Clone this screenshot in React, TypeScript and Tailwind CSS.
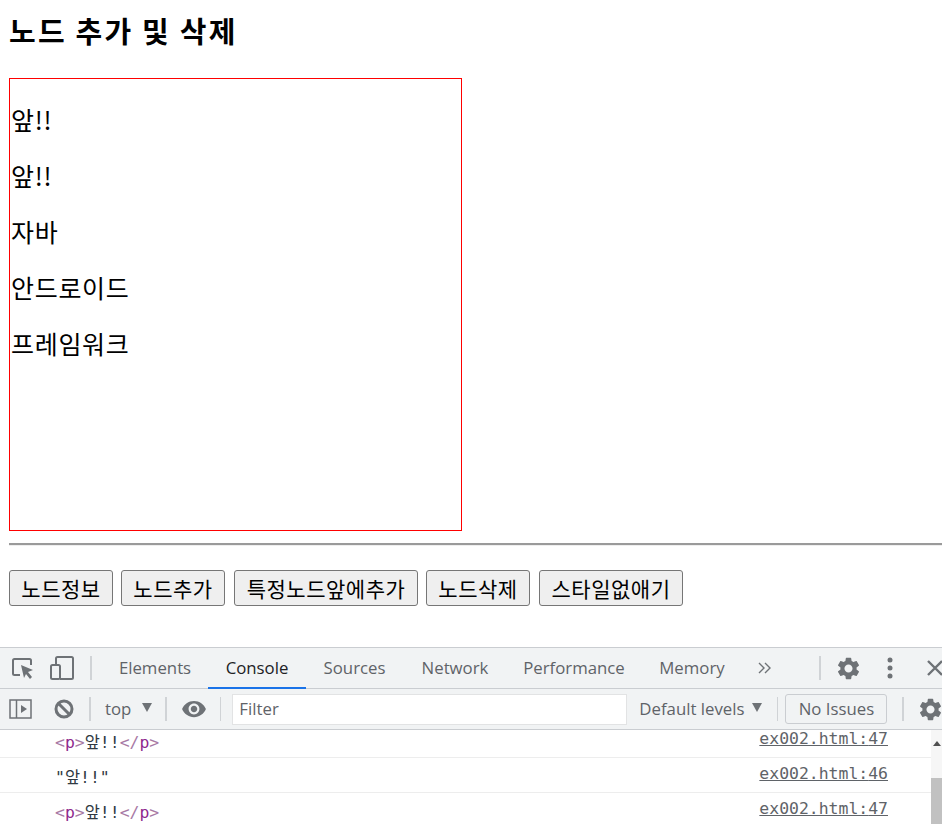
import { MdRemoveRedEye, MdSettings } from "react-icons/md";

const kr = "font-['Noto_Sans_CJK_KR','Liberation_Sans',sans-serif]";
const ui = "font-['Open_Sans','Noto_Sans',sans-serif]";
const mono = "font-['DejaVu_Sans_Mono','Noto_Sans_CJK_KR',monospace]";

const nodes = ["앞!!", "앞!!", "자바", "안드로이드", "프레임워크"];
const buttons = [
  { label: "노드정보", width: "w-[104px]", gap: "mr-2" },
  { label: "노드추가", width: "w-[104px]", gap: "mr-[9px]" },
  { label: "특정노드앞에추가", width: "w-[184px]", gap: "mr-2" },
  { label: "노드삭제", width: "w-[104px]", gap: "mr-[9px]" },
  { label: "스타일없애기", width: "w-[144px]", gap: "" },
];
const tabs = [
  { label: "Elements", width: "w-[106px]" },
  { label: "Console", width: "w-[98px]", active: true },
  { label: "Sources", width: "w-[97px]" },
  { label: "Network", width: "w-[104px]" },
  { label: "Performance", width: "w-[134px]" },
  { label: "Memory", width: "w-[102px]" },
];

function Divider({ className }: { className: string }) {
  return <div className={`w-0.5 shrink-0 bg-[#d0d3d6] ${className}`} />;
}

function PTag() {
  return (
    <span className="text-[#a87aa5]">
      &lt;<span className="text-[#8f2a8e]">p</span>&gt;
    </span>
  );
}

function CloseTag() {
  return (
    <span className="text-[#a87aa5]">
      &lt;/<span className="text-[#8f2a8e]">p</span>&gt;
    </span>
  );
}

function LogRow({ line, children, border }: { line: string; children: React.ReactNode; border?: boolean }) {
  return (
    <div className={`flex h-[35px] shrink-0 pl-[55px] pr-[54px] ${border ? "border-b border-[#ededed]" : ""}`}>
      <div className="flex-1 pt-[8px] leading-[24px] text-[#303942]">{children}</div>
      <span className="pt-[4px] leading-[24px] text-[#5f6368] underline">ex002.html:{line}</span>
    </div>
  );
}

export default function App() {
  return (
    <div className={`flex h-[824px] w-[942px] flex-col overflow-hidden bg-white text-black ${kr}`}>
      <div className="h-[647px] shrink-0 pl-[9px]">
        <h1 className="pt-[10px] text-[29px] leading-[40px] font-bold tracking-[2.200px]">노드 추가 및 삭제</h1>
        <div className="mt-[28px] h-[453px] w-[453px] border border-[#ff0000] pt-[24px] pl-px">
          {nodes.map((node, i) => (
            <p key={i} className="mb-[24px] h-8 text-[25px] leading-[32px] tracking-[0.7px]">
              {node}
            </p>
          ))}
        </div>
        <div className="mt-3 h-[3px] border-t-2 border-b border-t-[#9a9a9a] border-b-[#eeeeee]" />
        <div className="mt-[24px] flex">
          {buttons.map((b) => (
            <button
              key={b.label}
              type="button"
              className={`h-9 rounded-[3px] border border-[#767676] bg-[#efefef] text-[21px] leading-none tracking-[0.5px] ${b.width} ${b.gap}`}
            >
              {b.label}
            </button>
          ))}
        </div>
      </div>

      <div className={`flex flex-1 flex-col border-t border-[#cacdd1] text-[16.800px] text-[#5f6368] ${ui}`}>
        <div className="flex h-[41px] shrink-0 items-center border-b border-[#cacdd1] bg-[#f1f3f4]">
          <svg viewBox="0 0 24 24" className="ml-[11px] h-6 w-6 shrink-0" fill="none">
            <path d="M9 19H3.500A1.500 1.500 0 0 1 2 17.500v-13A1.500 1.500 0 0 1 3.500 3h15A1.500 1.500 0 0 1 20 4.500V9" stroke="#6e7276" strokeWidth="2" />
            <path d="M10 9l12 5-5 2 4 5-2 2-4-5-2 4z" fill="#6e7276" />
          </svg>
          <svg viewBox="0 0 24 24" className="ml-[15px] h-6 w-6 shrink-0" fill="none" stroke="#6e7276" strokeWidth="2">
            <rect x="1" y="9" width="9" height="14" rx="1.500" />
            <path d="M6 8V2.500A1.500 1.500 0 0 1 7.500 1h14A1.500 1.500 0 0 1 23 2.500v19a1.500 1.500 0 0 1-1.500 1.500H10" />
          </svg>
          <Divider className="ml-[16px] h-6" />
          <div className="ml-[10px] flex h-full shrink-0">
            {tabs.map((t) => (
              <div
                key={t.label}
                className={`relative flex items-center justify-center ${t.width} ${t.active ? "text-[#202124]" : ""}`}
              >
                {t.label}
                {t.active && <div className="absolute right-0 -bottom-px left-0 h-0.5 bg-[#1a73e8]" />}
              </div>
            ))}
          </div>
          <svg viewBox="0 0 14 14" className="ml-[15px] h-[14px] w-[14px] shrink-0" fill="none" stroke="#6e7276" strokeWidth="1.400">
            <path d="M1 2l5 5-5 5M7 2l5 5-5 5" />
          </svg>
          <Divider className="ml-[47px] h-6" />
          <MdSettings className="ml-[14px] h-[27px] w-[27px] shrink-0 text-[#6e7276]" />
          <svg viewBox="0 0 6 24" className="ml-[25px] h-6 w-[6px] shrink-0" fill="#6e7276">
            <circle cx="3" cy="4" r="2.500" />
            <circle cx="3" cy="12" r="2.500" />
            <circle cx="3" cy="20" r="2.500" />
          </svg>
          <svg viewBox="0 0 16 16" className="ml-[34px] h-4 w-4 shrink-0" fill="none" stroke="#6e7276" strokeWidth="2.400">
            <path d="M1 1l14 14M15 1L1 15" />
          </svg>
        </div>

        <div className="flex h-[41px] shrink-0 items-center border-b border-[#cacdd1] bg-[#f1f3f4]">
          <svg viewBox="0 0 23 20" className="ml-[9px] h-5 w-[23px] shrink-0" fill="none" stroke="#6e7276" strokeWidth="1.500">
            <rect x="1" y="1" width="21" height="18" />
            <path d="M7.500 1v18" />
            <path d="M12 6l6 4-6 4z" fill="#6e7276" stroke="none" />
          </svg>
          <svg viewBox="0 0 20 20" className="ml-[22px] h-5 w-5 shrink-0" fill="none" stroke="#6e7276" strokeWidth="3">
            <circle cx="10" cy="10" r="8" />
            <path d="M4.500 4.500l11 11" />
          </svg>
          <Divider className="ml-[15px] h-6" />
          <span className="ml-[14px]">top</span>
          <svg viewBox="0 0 10 9" className="ml-[10px] mb-[3px] h-[9px] w-[12px] shrink-0" fill="#6e7276">
            <path d="M0 0h10L5 9z" />
          </svg>
          <Divider className="ml-[12px] h-6" />
          <MdRemoveRedEye className="ml-[14px] h-[26px] w-[26px] shrink-0 text-[#6e7276]" />
          <Divider className="ml-[13px] h-6 w-px" />
          <div className="ml-[11px] flex h-[31px] w-[395px] shrink-0 items-center border border-[#e2e3e4] bg-white pl-[6px]">
            Filter
          </div>
          <span className="ml-[12px] w-[106px] whitespace-nowrap">Default levels</span>
          <svg viewBox="0 0 10 9" className="ml-[7px] mb-[3px] h-[9px] w-[12px] shrink-0" fill="#6e7276">
            <path d="M0 0h10L5 9z" />
          </svg>
          <Divider className="ml-[14px] h-6 w-px" />
          <div className="ml-[7px] flex h-[30px] w-[102px] shrink-0 items-center justify-center rounded-[3px] border border-[#cacdd1]">
            No Issues
          </div>
          <Divider className="ml-[15px] h-6" />
          <MdSettings className="ml-[13px] h-[27px] w-[27px] shrink-0 text-[#6e7276]" />
        </div>

        <div className={`relative flex-1 text-[16.450px] ${mono}`}>
          <div className="-mt-[7px]">
            <LogRow line="47" border>
              <PTag />앞!!<CloseTag />
            </LogRow>
            <LogRow line="46" border>
              "앞!!"
            </LogRow>
            <LogRow line="47">
              <PTag />앞!!<CloseTag />
            </LogRow>
          </div>
          <div className="absolute top-0 right-0 bottom-0 w-[11px] bg-[#f6f6f6]">
            <svg viewBox="0 0 8 5" className="mx-auto mt-[11px] h-[5px] w-2" fill="#505050">
              <path d="M0 5L4 0l4 5z" />
            </svg>
            <div className="mt-[32px] h-full bg-[#c1c1c1]" />
          </div>
        </div>
      </div>
    </div>
  );
}
